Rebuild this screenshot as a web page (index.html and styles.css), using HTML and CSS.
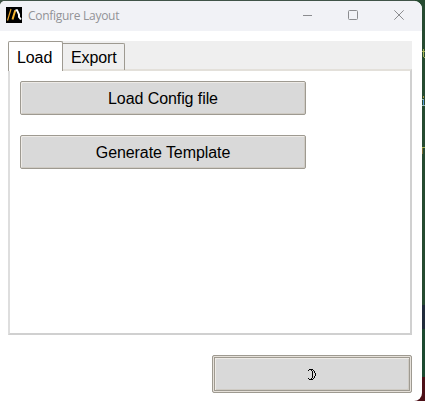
FILE: index.html
```
<!DOCTYPE html>
<html lang="en">
<head>
<meta charset="utf-8">
<title>Configure Layout</title>
<link rel="stylesheet" href="styles.css">
</head>
<body>
<div class="backdrop"></div>
<main class="window">
  <header class="titlebar">
    <svg class="logo" width="16" height="16" viewBox="0 0 16 16"><rect width="16" height="16" fill="#000"/><path d="M1.5 13.5L5 2" stroke="#e9a52c" stroke-width="1.2" fill="none"/><path d="M6.5 12.5L9.3 3.2" stroke="#f8b62e" stroke-width="2" fill="none"/><path d="M9.5 3.2H11L13 7.5V10L15 12.5" stroke="#fff" stroke-width="2" fill="none"/></svg>
    <h1 class="title">Configure Layout</h1>
    <div class="controls">
      <svg width="10" height="10"><path d="M1 5.5H10" stroke="#8b8c8f" fill="none"/></svg>
      <svg width="10" height="10"><rect x=".5" y=".5" width="9" height="9" rx="1" stroke="#8b8c8f" fill="none"/></svg>
      <svg width="10" height="10"><path d="M.3.3L9.7 9.7M9.7.3L.3 9.7" stroke="#8b8c8f" fill="none"/></svg>
    </div>
  </header>
  <section class="notebook">
    <nav class="tabs"><div class="tab active">Load</div><div class="tab">Export</div></nav>
    <div class="panel">
      <button class="btn">Load Config file</button>
      <button class="btn">Generate Template</button>
    </div>
  </section>
  <button class="theme" aria-label="Theme"><svg class="moon" width="8" height="12" viewBox="0 0 8 12" shape-rendering="crispEdges"><path d="M1 0h4v1H1zM0 1h1v1H0zM3 1h1v1H3zM5 1h1v1H5zM4 2h1v7H4zM6 2h1v2H6zM7 4h1v3H7zM6 7h1v2H6zM3 9h1v1H3zM5 9h1v1H5zM0 9h1v1H0zM1 10h4v1H1z" fill="#000"/></svg></button>
</main>
<svg class="frags" width="3" height="110" viewBox="0 0 3 110" shape-rendering="crispEdges"><path d="M1 1h1v8H1zM0 3h3v1H0zM2 9h1v1H2z" fill="#a6b559"/><path d="M1 48h1v2H1z" fill="#b09a4c"/><path d="M0 51h2v1H0zM0 57h3v1H0z" fill="#9cb8b4"/><path d="M1 52h1v5H1z" fill="#579ada"/><path d="M0 99h3v1H0z" fill="#a6b559"/><path d="M0 100h1v6H0z" fill="#7d6c32"/></svg>
</body>
</html>
```
FILE: styles.css
```
* { box-sizing: border-box; }
body {
  margin: 0;
  width: 425px;
  height: 401px;
  overflow: hidden;
  position: relative;
  padding-top: 1px;
  background: #405448;
  font-family: "Liberation Sans", Arial, sans-serif;
}
.backdrop {
  position: absolute;
  top: 0;
  right: 0;
  width: 10px;
  height: 401px;
  background: linear-gradient(#264b31 0 305px, #202c3b 305px 329px, #1c4a30 329px 377px, #4c1017 377px);
}
.frags { position: absolute; left: 422px; top: 48px; }
.window {
  position: relative;
  width: 422px;
  height: 400px;
  background: #fff;
  border-radius: 5px 8px 8px 0;
  overflow: hidden;
  display: flex;
  flex-direction: column;
}
.titlebar {
  display: flex;
  align-items: center;
  height: 30px;
  flex: none;
  padding: 0 18px 2px 6px;
  background: #f1f2f6;
}
.title {
  margin: 2px 0 0 6px;
  font: 400 12px/16px "Open Sans", "Noto Sans", sans-serif;
  letter-spacing: -.28px;
  color: #929396;
}
.controls { display: flex; gap: 36px; margin-left: auto; }
.controls svg { display: block; }
.notebook { width: 404px; height: 294px; margin: 10px 0 0 8px; }
.tabs { display: flex; align-items: flex-end; height: 28px; background: #efefef; }
.tab {
  width: 62px;
  height: 27px;
  margin-bottom: -1px;
  padding-left: 8px;
  border: 1px solid #9e9a91;
  border-left: 0;
  border-bottom: 0;
  border-radius: 0 2px 0 0;
  font-size: 16px;
  line-height: 28px;
  letter-spacing: -.1px;
  color: #000;
}
.tab.active {
  position: relative;
  width: 55px;
  height: 30px;
  margin-bottom: -2px;
  border-left: 1px solid #9e9a91;
  border-radius: 2px 2px 0 0;
  background: #fff;
  line-height: 31px;
}
.panel {
  height: 266px;
  padding: 10px;
  border: 2px solid #d0d0d0;
  border-top: 2px solid #e3e0da;
  border-left-color: #dedede;
  display: flex;
  flex-direction: column;
  gap: 20px;
}
.btn, .theme {
  display: block;
  padding: 0;
  background: #d9d9d9;
  border: 1px solid #9e9a91;
  border-radius: 2px;
  box-shadow: inset 1px 1px #eeebe7, inset -1px -1px #cfcbc4;
  font: 16px/30px "Liberation Sans", Arial, sans-serif;
  letter-spacing: -.08px;
  color: #000;
}
.btn { width: 286px; height: 34px; padding-top: 2px; }
.theme {
  width: 200px;
  height: 38px;
  margin: 20px 0 0 212px;
  display: flex;
  align-items: center;
  justify-content: center;
  box-shadow: inset 0 0 0 1px #e6e1da, inset 0 0 0 2px #9e9a91, inset 3px 3px #eeebe7, inset -3px -3px #cfcbc4;
}
.moon { position: relative; top: 1px; }
```
